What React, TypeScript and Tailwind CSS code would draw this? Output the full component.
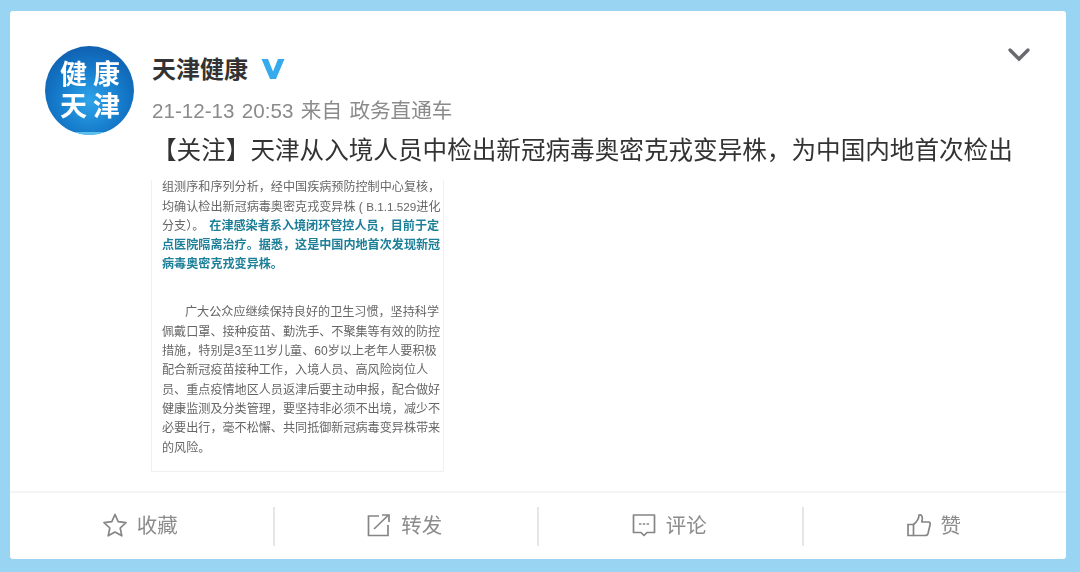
const cjk = "font-['Liberation_Sans','Noto_Sans_CJK_SC',sans-serif]";

const bottomLines = [
  "佩戴口罩、接种疫苗、勤洗手、不聚集等有效的防控",
  "措施，特别是3至11岁儿童、60岁以上老年人要积极",
  "配合新冠疫苗接种工作，入境人员、高风险岗位人",
  "员、重点疫情地区人员返津后要主动申报，配合做好",
  "健康监测及分类管理，要坚持非必须不出境，减少不",
  "必要出行，毫不松懈、共同抵御新冠病毒变异株带来",
  "的风险。",
];

function Line({ children }: { children: React.ReactNode }) {
  return <div className="h-[19.3px] whitespace-nowrap leading-[15.4px]">{children}</div>;
}

function Action({ icon, label, last }: { icon: React.ReactNode; label: string; last?: boolean }) {
  return (
    <div className={`flex h-[39px] flex-1 items-center justify-center gap-[10px] ${last ? "" : "border-r-2 border-[#e6e6e6]"}`}>
      <div className="-ml-[2px] -mt-[3px] flex">{icon}</div>
      <span className="text-[20.5px] text-[#8c8c8c]">{label}</span>
    </div>
  );
}

const stroke = { fill: "none", stroke: "#858585", strokeWidth: 1.7 };

export default function App() {
  return (
    <div className={`relative h-[572px] w-[1080px] overflow-hidden bg-[#99d4f3] pl-[10px] pt-[11px] ${cjk}`}>
      <div className="flex h-[548px] w-[1056px] flex-col rounded-[3px] bg-white blur-[0.3px]">
        <div className="flex h-[480px] flex-col pl-[35px] pt-[35px]">
          <div className="flex">
            <div className="relative flex h-[89px] w-[89px] shrink-0 flex-col items-center justify-center overflow-hidden rounded-full bg-[radial-gradient(circle_at_50%_62%,#2fa4ea_0%,#1479c9_48%,#0d4f9e_100%)] text-[27px] font-bold leading-[32px] tracking-[6px] text-white">
              <div className="pl-[7px]">健康</div>
              <div className="pl-[7px]">天津</div>
              <div className="absolute bottom-0 left-0 h-[3px] w-full bg-[#5cc0ee]" />
            </div>
            <div className="ml-[18px] pt-[9px]">
              <div className="flex h-[25px] items-center pt-[2px]">
                <span className="mt-[1px] text-[24px] font-bold leading-[25px] text-[#333333]">天津健康</span>
                <svg className="ml-[13px] mt-[1px]" width="24" height="22" viewBox="0 0 24 22">
                  <path d="M0.5 1H7L12 13.5L17 1H23.5L15 21H9Z" fill="#35abee" />
                </svg>
              </div>
              <div className="mt-[18px] text-[20.6px] leading-[26px] text-[#8b8b8b] [word-spacing:1.7px]">21-12-13 20:53 来自 政务直通车</div>
            </div>
          </div>
          <div className="ml-[107px] mt-[1px] whitespace-nowrap text-[24.6px] leading-[30px] text-[#333333]">
            【关注】天津从入境人员中检出新冠病毒奥密克戎变异株，为中国内地首次检出
          </div>
          <div className="ml-[106px] mt-[14px] h-[292px] w-[293px] overflow-hidden border-x border-b border-[#f0f0f0] pl-[10px] text-[12.1px] text-[#666666] blur-[0.4px]">
            <Line>组测序和序列分析，经中国疾病预防控制中心复核，</Line>
            <Line>
              均确认检出新冠病毒奥密克戎变异株 ( <span className="text-[11.7px]">B.1.1.529</span>进化
            </Line>
            <Line>
              分支）。<b className="ml-[5px] text-[#1d7f98]">在津感染者系入境闭环管控人员，目前于定</b>
            </Line>
            <Line>
              <b className="text-[#1d7f98]">点医院隔离治疗。据悉，这是中国内地首次发现新冠</b>
            </Line>
            <Line>
              <b className="text-[#1d7f98]">病毒奥密克戎变异株。</b>
            </Line>
            <div className="h-[29px]" />
            <Line>
              <span className="pl-[23px]">广大公众应继续保持良好的卫生习惯，坚持科学</span>
            </Line>
            {bottomLines.map((l) => (
              <Line key={l}>{l}</Line>
            ))}
          </div>
        </div>
        <div className="flex flex-1 items-center border-t-2 border-[#f4f4f4]">
          <Action
            label="收藏"
            icon={
              <svg width="24" height="24" viewBox="0 0 24 24" {...stroke}>
                <path d="M12 1.5L15.2 8.6L23 9.6L17.2 15L18.8 22.8L12 19L5.2 22.8L6.8 15L1 9.6L8.8 8.6Z" strokeLinejoin="round" />
              </svg>
            }
          />
          <Action
            label="转发"
            icon={
              <svg width="24" height="24" viewBox="0 0 24 24" {...stroke}>
                <path d="M12 3H1.5V22.5H21V12" />
                <path d="M7 16L21 2.5M15 2H22V9" />
              </svg>
            }
          />
          <Action
            label="评论"
            icon={
              <svg width="24" height="24" viewBox="0 0 24 24" {...stroke}>
                <path d="M1.5 2H22.5V19.5H15L12 22.5L9 19.5H1.5Z" strokeLinejoin="round" />
                <path d="M7 11H17" strokeDasharray="2.4 1.4" />
              </svg>
            }
          />
          <Action
            last
            label="赞"
            icon={
              <svg width="24" height="24" viewBox="0 0 24 24" {...stroke}>
                <path d="M1 11.5H6.5V22.5H1Z" />
                <path d="M6.5 11.5C9 9.5 12 6.5 12 2C15 1 16 4 14.8 9H21.5C23 9 23.4 10.5 23 12L21 20.5C20.6 22 19.7 22.5 18 22.5H6.5" strokeLinejoin="round" />
              </svg>
            }
          />
        </div>
      </div>
      <svg className="absolute left-[1007px] top-[47px]" width="24" height="16" viewBox="0 0 24 16" fill="none" stroke="#6a6a6e" strokeWidth="3.4" strokeLinecap="round">
        <path d="M3 3L12 12L21 3" />
      </svg>
    </div>
  );
}
